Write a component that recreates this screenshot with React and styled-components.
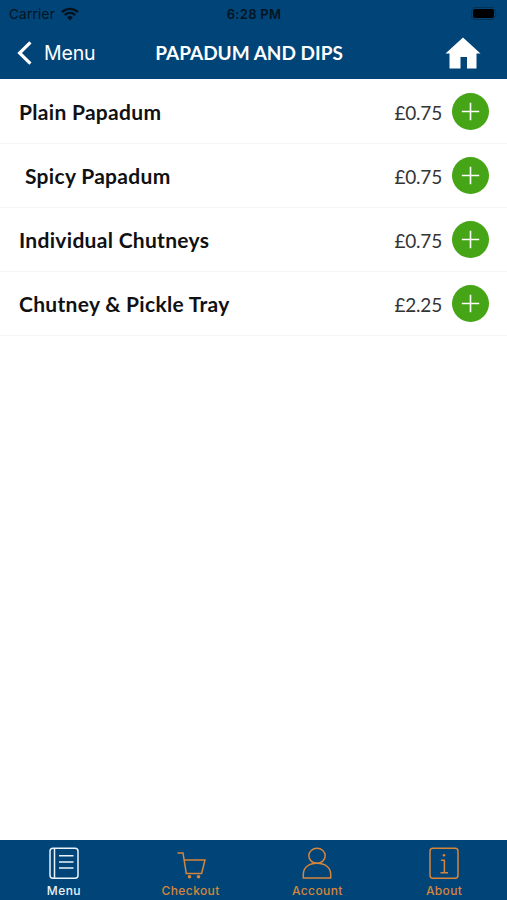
import React from 'react';
import styled, { createGlobalStyle, css } from 'styled-components';

const colors = {
  navy: '#004478',
  green: '#45a516',
  orange: '#d6853a',
  white: '#ffffff',
};

const GlobalStyle = createGlobalStyle`
  * {
    box-sizing: border-box;
  }

  body {
    margin: 0;
    background: ${colors.white};
  }

  button {
    padding: 0;
    border: 0;
    background: none;
    font: inherit;
    color: inherit;
  }

  svg {
    display: block;
  }
`;

const Screen = styled.div`
  display: flex;
  flex-direction: column;
  height: 900px;
  overflow: hidden;
  font-family: Lato, sans-serif;
  white-space: nowrap;
`;

const Header = styled.header`
  height: 79px;
  background: ${colors.navy};
`;

const StatusBar = styled.div`
  display: grid;
  grid-template-columns: 1fr auto 1fr;
  align-items: center;
  height: 27px;
  padding: 0 8px 0 9px;
  font-family: Inter, sans-serif;
  font-size: 13.5px;
  color: #031421;
`;

const Carrier = styled.div`
  display: flex;
  align-items: center;
  gap: 6px;
  letter-spacing: 0.25px;
`;

const Clock = styled.div`
  font-size: 13px;
  font-weight: 600;
  letter-spacing: 0.3px;
`;

const Battery = styled.div`
  display: flex;
  justify-content: flex-end;
`;

const NavBar = styled.nav`
  display: grid;
  grid-template-columns: 1fr auto 1fr;
  align-items: center;
  height: 52px;
  padding: 0 26px 0 17px;
  color: ${colors.white};
`;

const BackButton = styled.button`
  display: flex;
  align-items: center;
  gap: 12px;
  font-family: Inter, sans-serif;
  font-size: 19.5px;
  letter-spacing: -0.15px;
`;

const Title = styled.h1`
  margin: 0;
  font-size: 19px;
  font-weight: 700;
  line-height: 24px;
`;

const HomeButton = styled.button`
  justify-self: end;
`;

const List = styled.ul`
  flex: 1;
  margin: 0;
  padding: 1px 0 0;
  list-style: none;
`;

const Row = styled.li`
  display: flex;
  align-items: center;
  height: 64px;
  padding: 0 18px 0 ${({ $indented }) => ($indented ? 25 : 19)}px;
  border-bottom: 1px solid #f5f5f6;
`;

const Name = styled.span`
  flex: 1;
  font-size: 21px;
  font-weight: 700;
  letter-spacing: ${({ $tracking }) => $tracking}px;
  color: #111113;
`;

const Price = styled.span`
  margin-right: 10px;
  padding-top: 2px;
  font-size: 19px;
  letter-spacing: -0.2px;
  color: #343436;
`;

const AddButton = styled.button`
  display: grid;
  place-items: center;
  width: 37px;
  height: 37px;
  border-radius: 50%;
  background: ${colors.green};
  color: ${colors.white};
`;

const TabBar = styled.footer`
  display: grid;
  grid-template-columns: repeat(4, 1fr);
  height: 60px;
  background: ${colors.navy};
`;

const Tab = styled.button`
  display: flex;
  flex-direction: column;
  align-items: center;
  padding: 6px 0 0 1px;
  font-family: Inter, sans-serif;
  font-size: 12px;
  font-weight: 500;
  line-height: 16px;
  letter-spacing: 0.4px;
  color: ${colors.orange};

  ${({ $active }) =>
    $active &&
    css`
      color: #e9f3fb;
    `}
`;

const TabLabel = styled.span`
  margin-top: 3px;
`;

function WifiIcon() {
  return (
    <svg width="18" height="14" viewBox="0 0 18 14" fill="none" stroke="currentColor" strokeWidth="2.3">
      <path d="M1 5.1a11.4 11.4 0 0 1 16 0" />
      <path d="M3.8 8.1a7.4 7.4 0 0 1 10.4 0" />
      <path d="M9 13.5 6.1 10.5a4.2 4.2 0 0 1 5.8 0Z" fill="currentColor" stroke="none" />
    </svg>
  );
}

function BatteryIcon() {
  return (
    <svg width="28" height="13" viewBox="0 0 28 13">
      <rect x="0.5" y="0.5" width="24" height="12" rx="3.5" fill="none" stroke="#023458" />
      <rect x="2" y="2" width="21" height="9" rx="2" fill="#000" />
      <path d="M26 4.5q1.5 2 0 4Z" fill="#023458" />
    </svg>
  );
}

function BackIcon() {
  return (
    <svg width="15" height="24" viewBox="0 0 15 24" fill="none" stroke="currentColor" strokeWidth="3.2">
      <path d="M13.4 1.3 2.6 12l10.8 10.7" />
    </svg>
  );
}

function HomeIcon() {
  return (
    <svg width="36" height="32" viewBox="0 0 36 32" fill="currentColor">
      <path d="M18 0.5 35.5 16.5H31.5V31.5H22V20H15.5V31.5H4.5V16.5H0.5Z" />
    </svg>
  );
}

function PlusIcon() {
  return (
    <svg width="19" height="19" viewBox="0 0 19 19" stroke="currentColor" strokeWidth="1.6">
      <path d="M9.5 0.8v17.4M0.8 9.5h17.4" />
    </svg>
  );
}

function TabIcon({ children }) {
  return (
    <svg width="32" height="34" viewBox="0 0 32 34" fill="none" stroke="currentColor" strokeWidth="1.5">
      {children}
    </svg>
  );
}

const items = [
  { name: 'Plain Papadum', price: '£0.75', tracking: 0.3 },
  { name: 'Spicy Papadum', price: '£0.75', tracking: 0.3, indented: true },
  { name: 'Individual Chutneys', price: '£0.75', tracking: 0.3 },
  { name: 'Chutney & Pickle Tray', price: '£2.25', tracking: 0.3 },
];

const tabs = [
  {
    label: 'Menu',
    active: true,
    icon: (
      <>
        <rect x="2" y="2.3" width="28" height="30" rx="3" />
        <path d="M6.5 2.5v29.6M11 9.7h14.5M11 16h14.5M11 22h14.5" />
      </>
    ),
  },
  {
    label: 'Checkout',
    icon: (
      <>
        <path d="M2.5 7H8l3.3 20.5h15.3L30 14H9.2" />
        <circle cx="14.5" cy="30.8" r="1.8" fill="currentColor" stroke="none" />
        <circle cx="23.5" cy="30.8" r="1.8" fill="currentColor" stroke="none" />
      </>
    ),
  },
  {
    label: 'Account',
    icon: (
      <>
        <ellipse cx="16" cy="9.8" rx="8.2" ry="7.5" />
        <path d="M2.3 32v-3.5C2.3 21.5 8 17.2 16 17.2s13.7 4.3 13.7 11.3V32Z" />
      </>
    ),
  },
  {
    label: 'About',
    icon: (
      <>
        <rect x="2" y="2.3" width="28" height="30" rx="3" />
        <path d="M13 14.2h3.4v12.5M12.5 26.8h7.5" />
        <circle cx="16" cy="9.2" r="1.3" fill="currentColor" stroke="none" />
      </>
    ),
  },
];

export default function App() {
  return (
    <>
      <GlobalStyle />
      <Screen>
        <Header>
          <StatusBar>
            <Carrier>
              Carrier
              <WifiIcon />
            </Carrier>
            <Clock>6:28 PM</Clock>
            <Battery>
              <BatteryIcon />
            </Battery>
          </StatusBar>
          <NavBar>
            <BackButton>
              <BackIcon />
              Menu
            </BackButton>
            <Title>PAPADUM AND DIPS</Title>
            <HomeButton aria-label="Home">
              <HomeIcon />
            </HomeButton>
          </NavBar>
        </Header>
        <List>
          {items.map(({ name, price, tracking, indented }) => (
            <Row key={name} $indented={indented}>
              <Name $tracking={tracking}>{name}</Name>
              <Price>{price}</Price>
              <AddButton aria-label={`Add ${name}`}>
                <PlusIcon />
              </AddButton>
            </Row>
          ))}
        </List>
        <TabBar>
          {tabs.map(({ label, icon, active }) => (
            <Tab key={label} $active={active}>
              <TabIcon>{icon}</TabIcon>
              <TabLabel>{label}</TabLabel>
            </Tab>
          ))}
        </TabBar>
      </Screen>
    </>
  );
}
